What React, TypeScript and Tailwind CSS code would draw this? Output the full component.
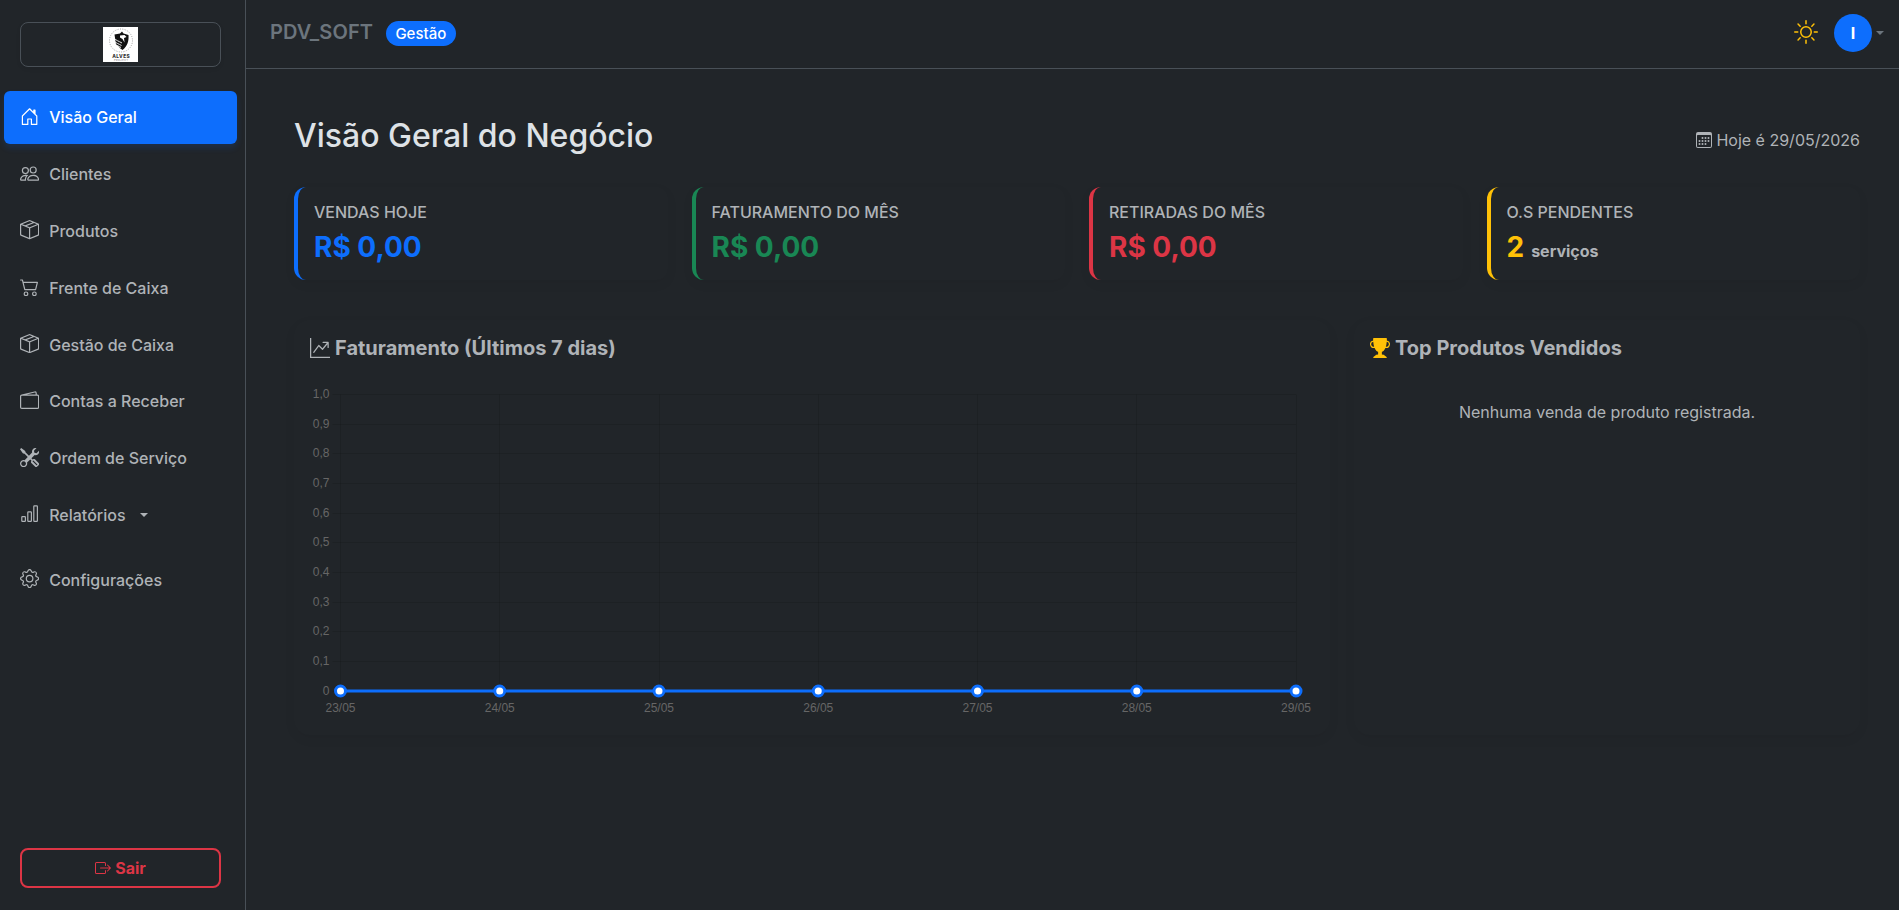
import {
  BsBarChart,
  BsBoxArrowRight,
  BsBoxSeam,
  BsCalendar3,
  BsCart2,
  BsGear,
  BsGraphUpArrow,
  BsHouseDoor,
  BsPeople,
  BsSun,
  BsTools,
  BsTrophyFill,
  BsWallet2,
} from 'react-icons/bs';
import type { IconType } from 'react-icons';

interface NavItem {
  label: string;
  icon: IconType;
  dropdown?: boolean;
}

const navItems: NavItem[] = [
  { label: 'Visão Geral', icon: BsHouseDoor },
  { label: 'Clientes', icon: BsPeople },
  { label: 'Produtos', icon: BsBoxSeam },
  { label: 'Frente de Caixa', icon: BsCart2 },
  { label: 'Gestão de Caixa', icon: BsBoxSeam },
  { label: 'Contas a Receber', icon: BsWallet2 },
  { label: 'Ordem de Serviço', icon: BsTools },
  { label: 'Relatórios', icon: BsBarChart, dropdown: true },
];

const stats = [
  { label: 'VENDAS HOJE', value: 'R$ 0,00', border: 'border-[#0d6efd]', text: 'text-[#0d6efd]' },
  { label: 'FATURAMENTO DO MÊS', value: 'R$ 0,00', border: 'border-[#198754]', text: 'text-[#198754]' },
  { label: 'RETIRADAS DO MÊS', value: 'R$ 0,00', border: 'border-[#dc3545]', text: 'text-[#dc3545]' },
  { label: 'O.S PENDENTES', value: '2', unit: 'serviços', border: 'border-[#ffc107]', text: 'text-[#ffc107]' },
];

const sales = [
  { day: '23/05', total: 0 },
  { day: '24/05', total: 0 },
  { day: '25/05', total: 0 },
  { day: '26/05', total: 0 },
  { day: '27/05', total: 0 },
  { day: '28/05', total: 0 },
  { day: '29/05', total: 0 },
];

const yTicks = ['0', '0,1', '0,2', '0,3', '0,4', '0,5', '0,6', '0,7', '0,8', '0,9', '1,0'];

const cardShadow = 'shadow-[0_4px_12px_rgba(0,0,0,0.05)]';

function Caret({ className = '' }: { className?: string }) {
  return (
    <span
      className={`inline-block border-x-[4.8px] border-t-[4.8px] border-x-transparent border-t-current ${className}`}
    />
  );
}

function Logo() {
  return (
    <svg width="35" height="35" viewBox="0 0 35 35">
      <rect width="35" height="35" fill="#fff" />
      <circle cx="18" cy="13.5" r="11.5" fill="none" stroke="#888" strokeWidth="0.8" strokeDasharray="1 1.4" />
      <path d="M11.500 7.500L17 6.500l2-2 1.500 2 5 1.500c.4 6-.8 11-6 15-1.500-.8-2.800-2-3.800-3.400L13 17.500z" fill="#111" />
      <path d="M17 8.500l4.500-.5 2 2-2.500 1 .5 4.500-2-3.500-2.500-1.500z" fill="#fff" />
      <path d="M11 11c2 2.500 4.500 3 8 5M11 14c2 2.200 4.500 2.700 7.500 4.500M12 17c2 1.700 3.500 2 6 3.500" fill="none" stroke="#fff" strokeWidth="0.9" />
      <text x="18.2" y="31" textAnchor="middle" fontSize="4.8" fontWeight="800" letterSpacing="0.4" fill="#333">
        ALVES
      </text>
      <text x="18.2" y="34.2" textAnchor="middle" fontSize="2.4" letterSpacing="0.5" fill="#777">
        PROJECT
      </text>
    </svg>
  );
}

function NavLink({ item, active = false }: { item: NavItem; active?: boolean }) {
  const Icon = item.icon;

  return (
    <a
      href="#"
      className={`flex h-[52.8px] items-center rounded-md px-4 font-medium ${
        active ? 'bg-[#0d6efd] text-white shadow-[0_4px_6px_rgba(13,110,253,0.15)]' : 'text-[#afb3b7]'
      }`}
    >
      <Icon className="mb-0.5 mr-2.5 size-[19.2px] shrink-0" />
      {item.label}
      {item.dropdown && <Caret className="ml-3.5" />}
    </a>
  );
}

function Sidebar() {
  return (
    <aside className="flex w-[246px] shrink-0 flex-col border-r border-[#495057]">
      <div className="ml-5 mr-6 mt-[22px] flex h-[45px] items-center justify-center rounded-lg border border-[#495057] shadow-[0_2px_4px_rgba(0,0,0,0.075)]">
        <Logo />
      </div>

      <nav className="mt-6 flex flex-col gap-1 pl-1 pr-2">
        {navItems.map((item, i) => (
          <NavLink key={item.label} item={item} active={i === 0} />
        ))}
        <div className="mt-2">
          <NavLink item={{ label: 'Configurações', icon: BsGear }} />
        </div>
      </nav>

      <button className="mb-[22px] ml-5 mr-6 mt-auto flex h-10 items-center justify-center gap-1 rounded-lg border-2 border-[#dc3545] font-bold text-[#dc3545]">
        <BsBoxArrowRight className="size-4" />
        Sair
      </button>
    </aside>
  );
}

function Header() {
  return (
    <header className="flex h-[69px] items-center justify-between border-b border-[#495057] pl-6 pr-[15px]">
      <div className="flex items-center text-xl font-semibold text-[#6c757d]">
        <span className="mb-[5px] tracking-[0.1px]">PDV_SOFT</span>
        <span className="mb-px ml-[13px] rounded-full bg-[#0d6efd] px-[9.3px] py-[5px] text-[15px] font-medium leading-[15px] text-white">
          Gestão
        </span>
      </div>
      <div className="flex items-center">
        <BsSun className="mb-[5px] size-6 text-[#ffc107]" />
        <div className="mb-[3px] ml-4 flex size-[38px] items-center justify-center rounded-full bg-[#0d6efd] font-bold text-white">
          I
        </div>
        <Caret className="mb-0.5 ml-1 text-[#6c757d]" />
      </div>
    </header>
  );
}

function SalesChart() {
  const left = 30.5;
  const right = 986;
  const top = 18.5;
  const bottom = 315;
  const x = (i: number) => left + (i * (right - left)) / (sales.length - 1);
  const y = (v: number) => bottom - v * (bottom - top);
  const points = sales.map((s, i) => `${x(i)},${y(s.total)}`).join(' ');

  return (
    <svg width="1004" height="342" className="block font-['Liberation_Sans',Arial,sans-serif]" fontSize="12" fill="#666">
      {yTicks.map((tick, i) => {
        const ty = Math.floor(y(i / 10)) + 0.5;
        return (
          <g key={tick}>
            <line x1={left - 8} x2={right} y1={ty} y2={ty} stroke="#000" strokeOpacity="0.1" />
            <text x={left - 11} y={ty + 3.5} textAnchor="end">
              {tick}
            </text>
          </g>
        );
      })}
      {sales.map((s, i) => {
        const tx = Math.floor(x(i)) + 0.5;
        return (
          <g key={s.day}>
            <line x1={tx} x2={tx} y1={top} y2={bottom + 8} stroke="#000" strokeOpacity="0.1" />
            <text x={x(i)} y={bottom + 21} textAnchor="middle">
              {s.day}
            </text>
          </g>
        );
      })}
      <polyline points={points} fill="none" stroke="#0d6efd" strokeWidth="3" />
      {sales.map((s, i) => (
        <circle key={s.day} cx={x(i)} cy={y(s.total)} r="5" fill="#fff" stroke="#0d6efd" strokeWidth="3" />
      ))}
    </svg>
  );
}

export default function App() {
  return (
    <div className="flex h-screen overflow-hidden bg-[#212529] font-[Inter,sans-serif] text-base text-[#dee2e6]">
      <Sidebar />

      <div className="flex min-w-0 flex-1 flex-col">
        <Header />

        <main className="flex-1 pl-12 pr-[39px] pt-12">
          <div className="flex h-[70px] items-start justify-between">
            <h2 className="text-[32px] font-medium leading-[38.4px]">Visão Geral do Negócio</h2>
            <div className="mt-[11px] flex items-center gap-1 text-[#afb3b7]">
              <BsCalendar3 />
              Hoje é 29/05/2026
            </div>
          </div>

          <div className="grid grid-cols-4 gap-6">
            {stats.map((stat) => (
              <div key={stat.label} className={`h-[93px] rounded-xl border-l-4 p-4 ${cardShadow} ${stat.border}`}>
                <h6 className="mb-2 font-medium leading-[19px] text-[#afb3b7]">{stat.label}</h6>
                <h3 className={`text-[28px] font-bold leading-[34px] ${stat.text}`}>
                  {stat.value}
                  {stat.unit && <small className="ml-[7px] text-base leading-4 text-[#afb3b7]">{stat.unit}</small>}
                </h3>
              </div>
            ))}
          </div>

          <div className="mt-10 flex gap-6">
            <section className={`h-[415px] w-[1036px] shrink-0 rounded-2xl p-4 ${cardShadow}`}>
              <h5 className="flex items-center gap-[5px] text-xl font-bold leading-6 text-[#afb3b7]">
                <BsGraphUpArrow />
                Faturamento (Últimos 7 dias)
              </h5>
              <div className="mt-4">
                <SalesChart />
              </div>
            </section>

            <section className={`h-[415px] flex-1 rounded-2xl p-4 ${cardShadow}`}>
              <h5 className="flex items-center gap-[5px] text-xl font-bold leading-6 text-[#afb3b7]">
                <BsTrophyFill className="text-[#ffc107]" />
                Top Produtos Vendidos
              </h5>
              <p className="mt-10 text-center text-[#afb3b7]">Nenhuma venda de produto registrada.</p>
            </section>
          </div>
        </main>
      </div>
    </div>
  );
}
